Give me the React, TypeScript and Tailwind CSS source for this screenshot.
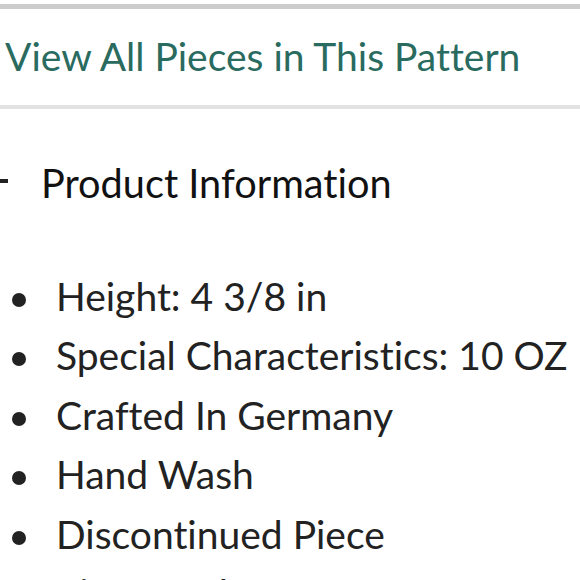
import React from "react";

const items = [
  "Height: 4 3/8 in",
  "Special Characteristics: 10 OZ",
  "Crafted In Germany",
  "Hand Wash",
  "Discontinued Piece",
  "Piece Code: CR",
];

export default function App() {
  return (
    <div
      className="w-[580px] h-[580px] overflow-hidden bg-white [font-variant-ligatures:none]"
      style={{ fontFamily: "Lato, 'Open Sans', sans-serif" }}
    >
      <div className="h-[4px]" />
      <div className="h-[5px] bg-[#cccccc]" />
      <div className="pt-[16.5px] pb-[19.5px] pl-[5px]">
        <div className="text-[39px] leading-[60px] text-[#2a6b5f] whitespace-nowrap">
          View All Pieces in This Pattern
        </div>
      </div>
      <div className="h-[4px] bg-[#e2e2e2]" />
      <div className="pt-[43.5px] flex items-center">
        <span className="w-[8px] h-[4px] bg-[#222222] mr-[33px] mt-[-4px]" />
        <div className="text-[39.7px] leading-[60px] text-[#111111] whitespace-nowrap">
          Product Information
        </div>
      </div>
      <ul className="pt-[54px]">
        {items.map((t) => (
          <li key={t} className="flex items-center">
            <span className="ml-[12px] w-[14px] h-[14px] rounded-full bg-[#222222] mr-[30px] mt-[7px]" />
            <span className="text-[39px] leading-[59.5px] text-[#222222] whitespace-nowrap">
              {t}
            </span>
          </li>
        ))}
      </ul>
    </div>
  );
}
